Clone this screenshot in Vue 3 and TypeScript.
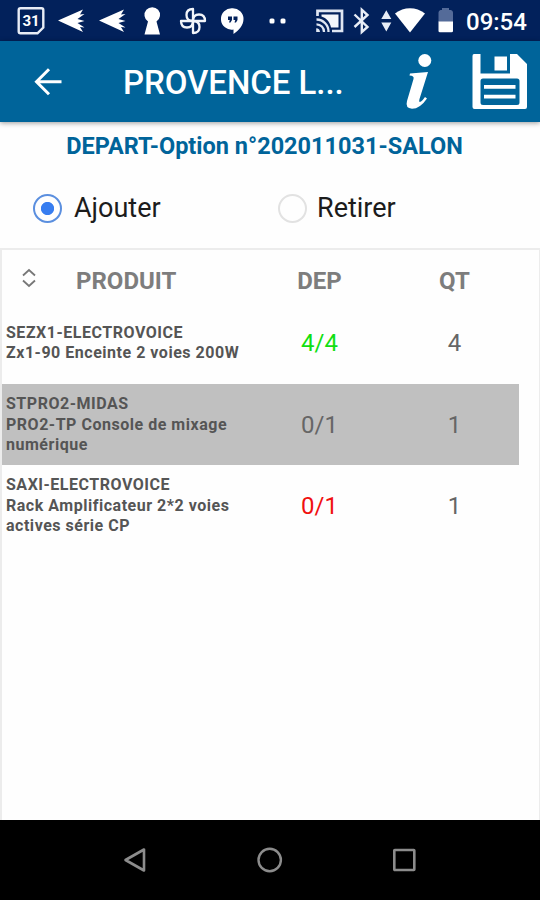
<script setup lang="ts">
import { ref } from 'vue'

interface Product {
  code: string
  label: string[]
  departed: string
  quantity: number
  state: 'done' | 'selected' | 'missing'
}

const mode = ref<'add' | 'remove'>('add')

const products: Product[] = [
  { code: 'SEZX1-ELECTROVOICE', label: ['Zx1-90 Enceinte 2 voies 200W'], departed: '4/4', quantity: 4, state: 'done' },
  { code: 'STPRO2-MIDAS', label: ['PRO2-TP Console de mixage', 'numérique'], departed: '0/1', quantity: 1, state: 'selected' },
  { code: 'SAXI-ELECTROVOICE', label: ['Rack Amplificateur 2*2 voies', 'actives série CP'], departed: '0/1', quantity: 1, state: 'missing' },
]
</script>

<template>
  <div class="screen">
    <div class="status">
      <svg width="50" height="41" viewBox="0 0 50 41">
        <path d="M20.5 8.3H41.5Q43.3 8.3 43.3 10V27.5L37.5 33.3H20.5Q18.7 33.3 18.7 31.5V10Q18.7 8.3 20.5 8.3Z" fill="none" stroke="#e8edf6" stroke-width="2.4" />
        <text x="31" y="26.3" class="day">31</text>
      </svg>
      <svg v-for="n in 2" :key="n" width="41" height="41" viewBox="50 0 41 41">
        <path d="M58 20.500L83 9.500L80 14.500L84.500 14L77.500 19L84.500 21L77.500 23L84.500 27.500L80 27L83 32Z" fill="#fff" />
      </svg>
      <svg width="40" height="41" viewBox="132 0 40 41">
        <path d="M148 21.500A7.800 7.800 0 1 1 156.500 21.500L160 34.500H144.500Z" fill="#fff" />
      </svg>
      <svg width="41" height="41" viewBox="172 0 41 41">
        <g fill="none" stroke="#f2f5fa" stroke-width="2.300" stroke-linejoin="round">
          <path d="M193 21V9Q186.500 9 186.500 15Q186.500 21 193 21" />
          <path d="M193 21H205Q205 14.500 199 14.500Q193 14.500 193 21" />
          <path d="M193 21V33Q199.500 33 199.500 27Q199.500 21 193 21" />
          <path d="M193 21H181Q181 27.500 187 27.500Q193 27.500 193 21" />
        </g>
      </svg>
      <svg width="42" height="41" viewBox="213 0 42 41">
        <path d="M232.500 8.300A10.700 10.700 0 0 1 243.500 19C243.500 25 239 30.500 233.500 34V29.500A10.700 10.700 0 1 1 232.500 8.300Z" fill="#fff" />
        <path d="M228 16.500H232V20L230.500 22.500H229L229.800 20H228ZM233.500 16.500H237.500V20L236 22.500H234.500L235.300 20H233.500Z" fill="#02215b" />
      </svg>
      <svg width="50" height="41" viewBox="255 0 50 41">
        <rect x="269.500" y="18.500" width="5" height="5" rx="1.500" fill="#fff" />
        <rect x="280.500" y="18.500" width="5" height="5" rx="1.500" fill="#fff" />
      </svg>
      <svg width="44" height="41" viewBox="305 0 44 41">
        <path d="M317.500 16V10.800H342V31H332" fill="none" stroke="#dfe6f2" stroke-width="2.700" />
        <path d="M321.500 14.500H338.500V27.500H331C330 22 326.500 18 321.500 16.500Z" fill="#f3f6fb" />
        <path d="M316.500 19.500A12 12 0 0 1 328.500 32M316.500 24.300A7.500 7.500 0 0 1 324 32" fill="none" stroke="#dfe6f2" stroke-width="2.300" />
        <path d="M316.200 28.300A4 4 0 0 1 320 32H316.200Z" fill="#dfe6f2" />
      </svg>
      <svg width="26" height="41" viewBox="349 0 26 41">
        <path d="M354.500 14.500L367.500 27L361.800 32V9.800L367.500 15L354.500 27" fill="none" stroke="#e8edf6" stroke-width="2.400" />
      </svg>
      <svg width="19" height="41" viewBox="375 0 19 41">
        <path d="M381.300 19L386.300 10.300L391.300 19ZM381.300 22.500L386.300 31.500L391.300 22.500Z" fill="#e8edf6" />
      </svg>
      <svg width="36" height="41" viewBox="394 0 36 41">
        <path d="M395 13.500C404 6.500 416 6.500 425 13.500L410 32.500Z" fill="#fff" />
      </svg>
      <svg width="30" height="41" viewBox="430 0 30 41">
        <path d="M438.500 22V12.500Q438.500 10.500 440.500 10H442V8H449V10H451Q453 10.500 453 12.500V22Z" fill="#546b99" />
        <path d="M438.500 21.500H453V31Q453 32.300 451.500 32.300H440Q438.500 32.300 438.500 31Z" fill="#fff" />
      </svg>
      <span class="clock">09:54</span>
    </div>

    <header class="appbar">
      <svg width="123" height="81" viewBox="0 41 123 81">
        <path d="M61.500 81.700H37M49 69.200L36.500 81.700L49 94.200" fill="none" stroke="#fff" stroke-width="3" />
      </svg>
      <h1>PROVENCE L...</h1>
      <svg width="60" height="81" viewBox="390 41 60 81">
        <circle cx="424.800" cy="60.500" r="6.500" fill="#fff" />
        <path d="M410 73.500L428 72L419.500 99Q418.500 103 421 101.500Q423 100 425 97L427 98.500Q420 108.800 412 108.800Q405 108.300 407 101L413.500 79Q414.500 75.500 409.500 75.500Z" fill="#fff" />
      </svg>
      <svg width="90" height="81" viewBox="450 41 90 81">
        <path fill-rule="evenodd" d="M474 54H480.500V73.500H510V54H517L527 64V107Q527 109 525 109H474.500Q472.500 109 472.500 107V56Q472.500 54 474 54ZM483 78.500Q480.500 78.500 480.500 81V102.500Q480.500 105 483 105H517Q519.500 105 519.500 102.500V81Q519.500 78.500 517 78.500Z" fill="#fff" />
        <path d="M494.500 56.500H507V70.500H494.500ZM484 85H515.500V88.700H484ZM484 94.700H515.500V98.400H484Z" fill="#fff" />
      </svg>
    </header>

    <main>
      <h2>DEPART-Option n°202011031-SALON</h2>
      <div class="modes">
        <label class="mode">
          <input v-model="mode" type="radio" value="add" /><span class="dot"></span><span>Ajouter</span>
        </label>
        <label class="mode remove">
          <input v-model="mode" type="radio" value="remove" /><span class="dot"></span><span>Retirer</span>
        </label>
      </div>

      <section class="table">
        <div class="row head">
          <div class="head-product">
            <svg width="16" height="20" viewBox="0 0 16 20">
              <path d="M2 7.500L8 2L14 7.500M2 12.500L8 18L14 12.500" fill="none" stroke="#777" stroke-width="1.800" />
            </svg>
            <span>PRODUIT</span>
          </div>
          <div class="cell">DEP</div>
          <div class="cell">QT</div>
        </div>
        <div v-for="p in products" :key="p.code" class="row" :class="p.state">
          <div class="name">
            <div>{{ p.code }}</div>
            <div v-for="line in p.label" :key="line">{{ line }}</div>
          </div>
          <div class="cell dep">{{ p.departed }}</div>
          <div class="cell">{{ p.quantity }}</div>
        </div>
      </section>
    </main>

    <nav>
      <svg width="26" height="28" viewBox="0 0 26 28"><path d="M2.500 14L21 3.500V24.500Z" fill="none" stroke="#8c8c8c" stroke-width="2.600" stroke-linejoin="round" /></svg>
      <svg width="26" height="28" viewBox="0 0 26 28"><circle cx="12.700" cy="14" r="11.200" fill="none" stroke="#8c8c8c" stroke-width="2.400" /></svg>
      <svg width="26" height="28" viewBox="0 0 26 28"><rect x="3.300" y="4" width="20" height="20" rx="0.500" fill="none" stroke="#8c8c8c" stroke-width="2.600" /></svg>
    </nav>
  </div>
</template>

<style>
body { margin: 0; }
</style>

<style scoped>
.screen {
  width: 540px;
  height: 900px;
  display: flex;
  flex-direction: column;
  overflow: hidden;
  background: #fefefe;
  font-family: Roboto, "Liberation Sans", sans-serif;
}
svg { display: block; flex: none; }
.status {
  display: flex;
  height: 41px;
  flex: none;
  background: #02215b;
}
.day {
  font-size: 15px;
  font-weight: 700;
  fill: #fff;
  text-anchor: middle;
}
.clock {
  padding-left: 6px;
  font-size: 24px;
  font-weight: 500;
  line-height: 44px;
  color: #fff;
}
.appbar {
  display: flex;
  height: 81px;
  flex: none;
  background: #00649a;
  box-shadow: 0 1px 5px rgba(0, 0, 0, 0.4);
}
h1 {
  margin: 0;
  width: 267px;
  font-size: 33px;
  font-weight: 500;
  line-height: 83px;
  letter-spacing: -0.05px;
  color: #fff;
  white-space: nowrap;
}
main {
  flex: 1;
  display: flex;
  flex-direction: column;
}
h2 {
  margin: 0;
  padding-right: 11px;
  height: 47px;
  text-align: center;
  font-size: 23.5px;
  font-weight: 700;
  line-height: 48px;
  color: #00649a;
  white-space: nowrap;
}
.modes {
  display: grid;
  grid-template-columns: 245px 1fr;
  padding-left: 33px;
  height: 79px;
}
.mode {
  display: flex;
  align-items: center;
  height: 78px;
  gap: 12px;
  font-size: 27px;
  color: #1c1c1c;
}
.remove { gap: 10px; }
.mode input { display: none; }
.dot {
  box-sizing: border-box;
  width: 29px;
  height: 29px;
  border: 2px solid #e2e2e2;
  border-radius: 50%;
}
input:checked + .dot {
  border-color: #5b8fdf;
  background: radial-gradient(circle, #377df0 6.2px, transparent 7px);
}
.table {
  flex: 1;
  border: 2px solid #ececec;
  border-right-width: 1px;
  border-bottom: 0;
}
.row {
  display: grid;
  grid-template-columns: 250px 135px 135px;
  align-items: center;
  width: 517px;
  height: 81px;
  font-size: 24px;
  color: #666;
}
.head {
  height: 61px;
  font-weight: 700;
  color: #7d7d7d;
}
.head-product {
  display: flex;
  align-items: center;
  padding-left: 19px;
  gap: 39px;
}
.head-product svg { position: relative; top: -3px; }
.cell { text-align: center; }
.name {
  padding-left: 4px;
  font-size: 16px;
  font-weight: 700;
  line-height: 20.4px;
  letter-spacing: 0.52px;
  color: #555;
  white-space: nowrap;
}
.selected .name, .missing .name { padding-top: 1px; }
.done {
  box-sizing: border-box;
  height: 73px;
  padding-bottom: 9px;
}
.done .dep { color: #12df12; }
.selected { background: #c0c0c0; }
.missing .dep { color: #f01010; }
nav {
  display: flex;
  justify-content: space-between;
  align-items: center;
  box-sizing: border-box;
  height: 80px;
  flex: none;
  padding: 0 123px;
  background: #000;
}
</style>
